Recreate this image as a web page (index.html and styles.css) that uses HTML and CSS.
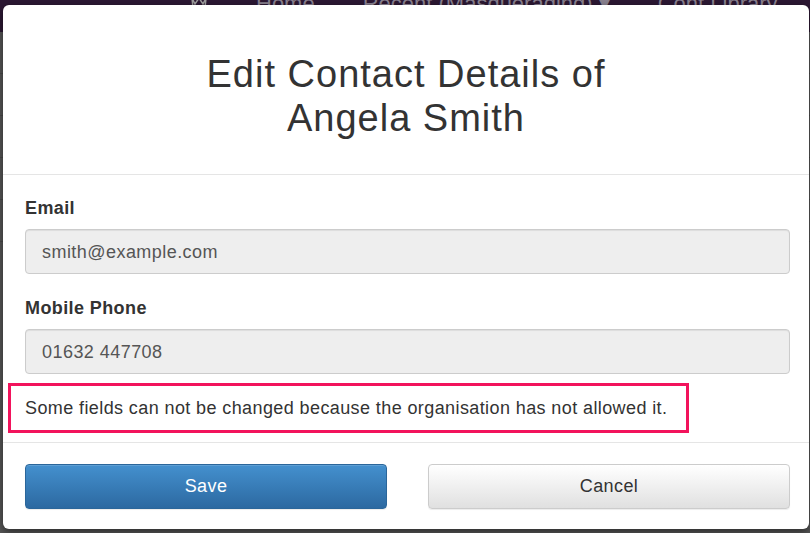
FILE: index.html
```html
<!DOCTYPE html>
<html lang="en">
<head>
<meta charset="utf-8">
<title>Edit Contact Details</title>
<link rel="stylesheet" href="styles.css">
</head>
<body>
<div class="page">
  <nav class="navbar">
    <span class="nav-icon">
      <svg width="18" height="14" viewBox="0 0 18 14"><path d="M2 2 L5 8 L9 2 L13 8 L16 2 L15 12 L3 12 Z" fill="none" stroke="#9d9d9d" stroke-width="1.5"/></svg>
    </span>
    <span class="nav-link">Home</span>
    <span class="nav-link">Recent (Masquerading) ▾</span>
    <span class="nav-link">Cont Library</span>
  </nav>
  <div class="backdrop">
    <div class="bg-row"></div>
    <div class="bg-row"></div>
    <div class="bg-row"></div>
    <div class="bg-row"></div>
    <div class="bg-row"></div>
  </div>

  <div class="modal">
    <header class="modal-header">
      <h1 class="modal-title">Edit Contact Details of<br>Angela Smith</h1>
    </header>
    <div class="modal-body">
      <div class="form-group">
        <label class="field-label">Email</label>
        <div class="field-input">smith@example.com</div>
      </div>
      <div class="form-group">
        <label class="field-label">Mobile Phone</label>
        <div class="field-input">01632 447708</div>
      </div>
      <div class="notice">Some fields can not be changed because the organisation has not allowed it.</div>
    </div>
    <footer class="modal-footer">
      <button class="btn btn-primary">Save</button>
      <button class="btn btn-default">Cancel</button>
    </footer>
  </div>
</div>
</body>
</html>
```

FILE: styles.css
```css
* { box-sizing: border-box; }

html, body {
  margin: 0;
  padding: 0;
  width: 810px;
  height: 533px;
  overflow: hidden;
  font-family: "Liberation Sans", Arial, sans-serif;
  color: #333;
}

.page {
  position: relative;
  width: 810px;
  height: 533px;
  background: #565656;
  overflow: hidden;
}

.navbar {
  height: 32px;
  background: #2c1833;
  display: flex;
  align-items: flex-end;
  gap: 48px;
  padding-left: 190px;
  overflow: hidden;
}

.nav-icon {
  margin-bottom: 22px;
  display: flex;
}

.nav-link {
  font-family: "Liberation Sans", Arial, sans-serif;
  font-size: 22px;
  color: #8a8290;
  line-height: 22px;
  margin-bottom: 17px;
}

.backdrop {
  display: flex;
  flex-direction: column;
}

.bg-row {
  height: 42px;
  border-bottom: 1px solid #4a4a4a;
}

.modal {
  position: absolute;
  left: 3px;
  top: 5px;
  width: 806px;
  height: 524px;
  background: #fff;
  border-radius: 6px;
  box-shadow: 0 3px 9px rgba(0, 0, 0, 0.5);
  display: flex;
  flex-direction: column;
}

.modal-header {
  padding: 47px 22px 34px;
  border-bottom: 1px solid #e5e5e5;
  text-align: center;
}

.modal-title {
  margin: 0;
  font-size: 38px;
  letter-spacing: 1px;
  font-weight: normal;
  line-height: 44px;
  color: #333;
}

.modal-body {
  padding: 23px 19px 9px 22px;
}

.form-group {
  display: flex;
  flex-direction: column;
  margin-bottom: 24px;
}

.form-group + .form-group {
  margin-bottom: 9px;
}

.field-label {
  font-size: 18px;
  letter-spacing: 0.4px;
  font-weight: bold;
  line-height: 20px;
  margin-bottom: 11px;
  color: #333;
}

.field-input {
  height: 45px;
  background: #eee;
  border: 1px solid #ccc;
  border-radius: 4px;
  box-shadow: inset 0 1px 1px rgba(0, 0, 0, 0.075);
  padding: 0 16px;
  font-size: 18px;
  letter-spacing: 0.45px;
  line-height: 44px;
  color: #555;
}

.notice {
  display: inline-block;
  margin-left: -17px;
  height: 50px;
  border: 3px solid #f2135c;
  padding: 0 19px 0 14px;
  font-size: 18px;
  letter-spacing: 0.4px;
  line-height: 45px;
  color: #333;
}

.modal-footer {
  border-top: 1px solid #e5e5e5;
  padding: 21px 19px 20px 22px;
  display: grid;
  grid-template-columns: 1fr 1fr;
  column-gap: 41px;
}

.btn {
  height: 45px;
  border-radius: 4px;
  font-family: "Liberation Sans", Arial, sans-serif;
  font-size: 18px;
  letter-spacing: 0.4px;
  padding: 0;
  cursor: pointer;
}

.btn-primary {
  color: #fff;
  background: linear-gradient(to bottom, #4490ce 0%, #2c69a1 100%);
  border: 1px solid #2b669a;
  box-shadow: inset 0 1px 0 rgba(255, 255, 255, 0.15), 0 1px 1px rgba(0, 0, 0, 0.075);
}

.btn-default {
  color: #333;
  background: linear-gradient(to bottom, #fff 0%, #e0e0e0 100%);
  border: 1px solid #ccc;
  box-shadow: inset 0 1px 0 rgba(255, 255, 255, 0.15), 0 1px 1px rgba(0, 0, 0, 0.075);
}
```
